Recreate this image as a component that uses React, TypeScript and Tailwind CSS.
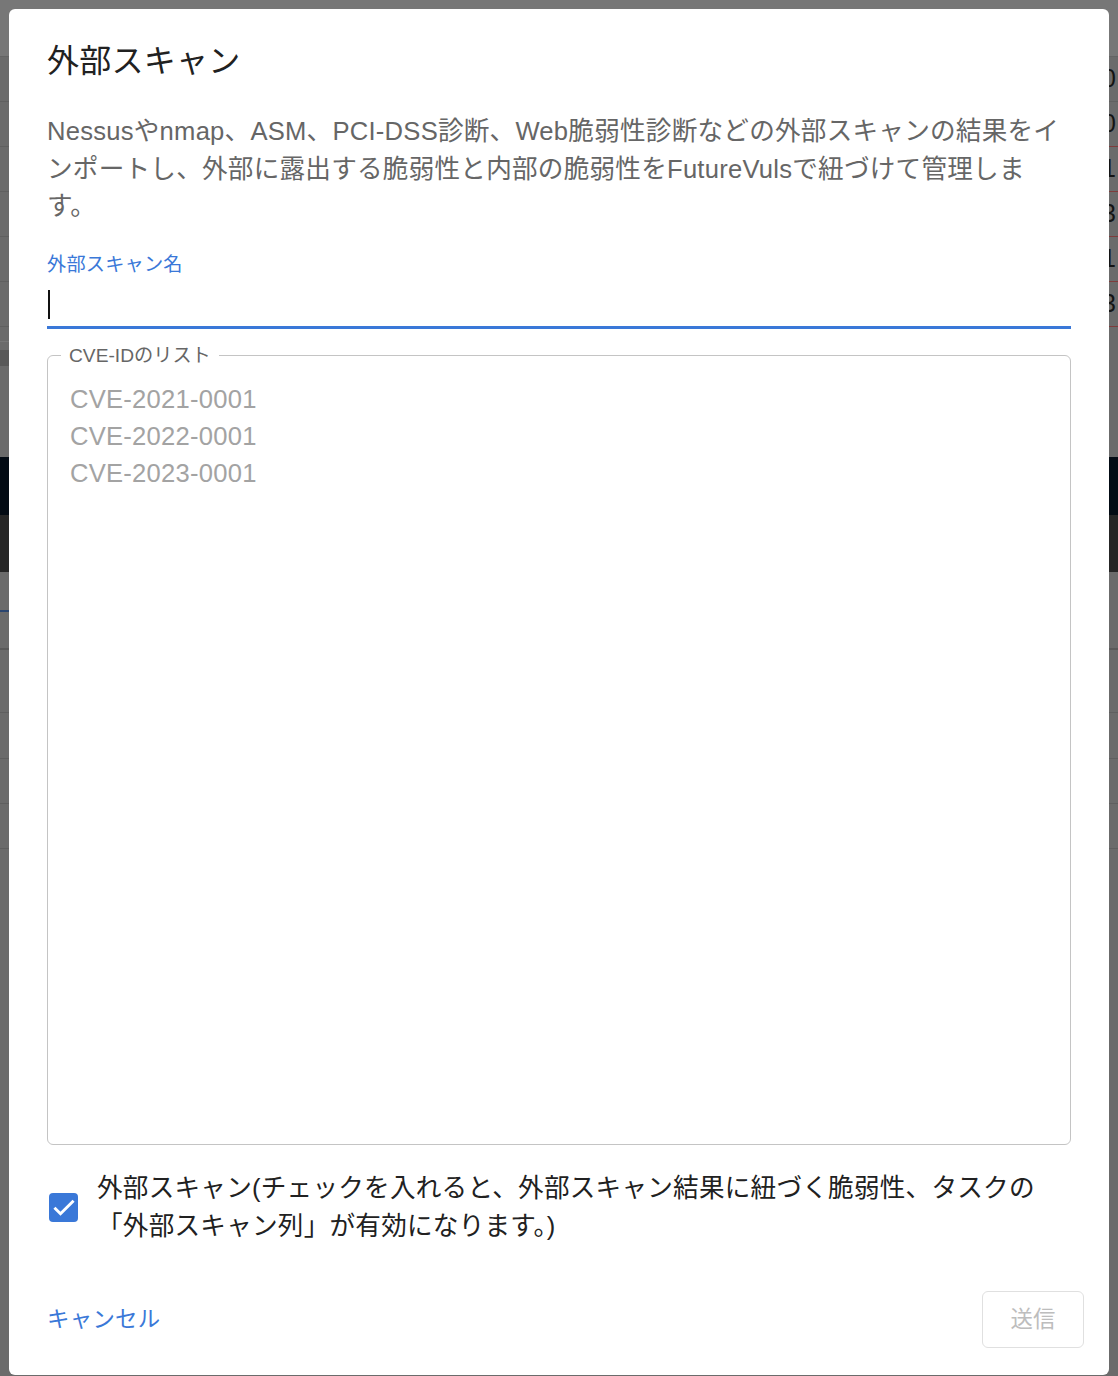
import { useState } from "react"

const font = "font-['Liberation_Sans','Noto_Sans_CJK_JP',sans-serif]"

const counts = ["0", "0", "1", "3", "1", "3"]

function PageBehind() {
  return (
    <div className="flex flex-col">
      <div className="h-[57px] bg-[#777777] border-b border-[#646464]" />
      {counts.map((c, i) => (
        <div key={i} className="h-[45px] flex">
          <div className="flex-1 border-b border-[#606060]" />
          <div
            className={
              i === 0
                ? "w-[40px] flex items-center justify-end pr-[2px] border-b border-[#606060] text-[25px] text-[#141414]"
                : "w-[40px] flex items-center justify-end pr-[2px] border-b border-[#7e3c3c] text-[25px] text-[#141414]"
            }
          >
            {c}
          </div>
        </div>
      ))}
      <div className="h-[46px] flex flex-col">
        <div className="w-[300px] mt-[14px] h-px bg-[#777777]" />
        <div className="w-[300px] mt-[8px] h-[16px] bg-[#595959]" />
      </div>
      <div className="h-[84px]" />
      <div className="h-[58px] bg-[#030b14]" />
      <div className="h-[57px] bg-[#262626]" />
      <div className="h-[76px] flex flex-col">
        <div className="w-[200px] mt-[38px] h-[2px] bg-[#2b4670]" />
      </div>
      <div className="h-[2px] bg-[#5a5a5a]" />
      <div className="h-[63px] border-b border-[#5f5f5f]" />
      <div className="h-[46px] border-b border-[#5f5f5f]" />
      <div className="h-[45px] border-b border-[#5f5f5f]" />
      <div className="h-[45px] border-b border-[#5f5f5f]" />
    </div>
  )
}

export default function App() {
  const [checked, setChecked] = useState(true)
  return (
    <div className={`relative h-[1376px] w-full overflow-hidden bg-[#6b6b6b] ${font}`}>
      <PageBehind />
      <div className="absolute left-[9px] top-[9px] w-[1100px] h-[1366px] bg-white rounded-[6px] flex flex-col">
        <div className="px-[38px] pt-[27px]">
          <h2 className="text-[32px] leading-[51px] font-normal tracking-[0.24px] text-[#212121]">外部スキャン</h2>
          <p className="mt-[26px] w-[1016px] text-[25.6px] leading-[37.5px] tracking-[0.24px] text-[#666666]">
            Nessusやnmap、ASM、PCI-DSS診断、Web脆弱性診断などの外部スキャンの結果をインポートし、外部に露出する脆弱性と内部の脆弱性をFutureVulsで紐づけて管理します。
          </p>
          <label className="block mt-[29px] text-[19.2px] leading-[19.2px] tracking-[0.2px] text-[#3a78d8]">外部スキャン名</label>
          <div className="mt-[10px] h-[45px] border-b-[3px] border-[#3a78d8] flex items-center">
            <span className="ml-[1px] w-[2px] h-[29px] bg-[#111111]" />
          </div>
          <fieldset className="mt-[15px] h-[801px] border border-[#c4c4c4] rounded-[6px] px-[22px]">
            <legend className="ml-[-9px] px-[8px] text-[19.2px] leading-[24px] text-[#666666]">CVE-IDのリスト</legend>
            <textarea
              className="block w-full mt-[13px] h-[740px] resize-none outline-none bg-transparent text-[25.6px] leading-[37px] tracking-[0.24px] text-[#212121] placeholder:text-[#a3a3a3]"
              placeholder={"CVE-2021-0001\nCVE-2022-0001\nCVE-2023-0001"}
            />
          </fieldset>
          <div className="mt-[24px] flex items-center">
            <button
              onClick={() => setChecked(!checked)}
              className={
                checked
                  ? "ml-[2px] w-[29px] h-[29px] shrink-0 rounded-[4px] bg-[#3a78d8] flex items-center justify-center"
                  : "ml-[2px] w-[29px] h-[29px] shrink-0 rounded-[4px] border-2 border-[#757575] bg-white"
              }
            >
              {checked && (
                <svg width="28" height="28" viewBox="0 0 24 24" fill="none">
                  <path d="M3.8 12.6l5.2 5.2L20.2 6.6" stroke="white" strokeWidth="2.5" />
                </svg>
              )}
            </button>
            <span className="ml-[19px] text-[25.6px] leading-[38.4px] tracking-[0.24px] text-[#212121]">
              外部スキャン(チェックを入れると、外部スキャン結果に紐づく脆弱性、タスクの「外部スキャン列」が有効になります。)
            </span>
          </div>
        </div>
        <div className="mt-auto flex items-center justify-between pl-[38px] pr-[25px] pb-[27px]">
          <button className="text-[22.4px] leading-[32px] tracking-[0.3px] text-[#3a78d8]">キャンセル</button>
          <button
            disabled
            className="h-[57px] w-[102px] border border-[#e0e0e0] rounded-[6px] text-[22.4px] text-[#bdbdbd]"
          >
            送信
          </button>
        </div>
      </div>
    </div>
  )
}
